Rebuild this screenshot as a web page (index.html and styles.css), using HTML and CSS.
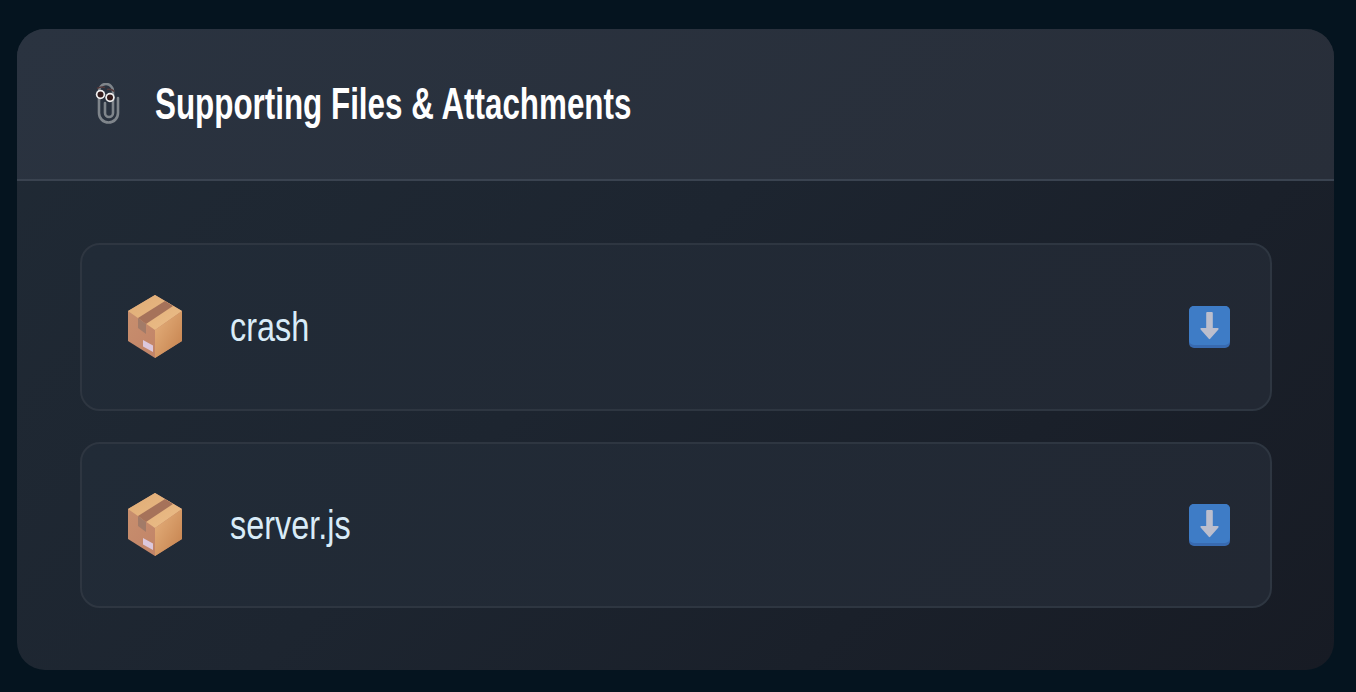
FILE: index.html
```html
<!DOCTYPE html>
<html lang="en">
<head>
    <meta charset="UTF-8">
    <meta name="viewport" content="width=device-width, initial-scale=1.0">
    <title>Supporting Files &amp; Attachments</title>
    <link rel="stylesheet" href="styles.css">
</head>
<body>
    <svg class="defs" width="0" height="0" aria-hidden="true">
        <defs>
            <linearGradient id="box-top" x1="0" y1="0" x2="1" y2="1">
                <stop offset="0" stop-color="#e0ac76"/>
                <stop offset="1" stop-color="#ebbd88"/>
            </linearGradient>
            <linearGradient id="box-left" x1="0" y1="0" x2="1" y2="1">
                <stop offset="0" stop-color="#c9916f"/>
                <stop offset="1" stop-color="#bf7f65"/>
            </linearGradient>
            <linearGradient id="box-right" x1="0" y1="0" x2="1" y2="1">
                <stop offset="0" stop-color="#e6b27e"/>
                <stop offset="1" stop-color="#c4804c"/>
            </linearGradient>
            <symbol id="box" viewBox="0 0 56 64">
                <path d="M28 0 L55 16 V46 L28 63 L1 46 V16 Z" fill="url(#box-left)"/>
                <path d="M28 0 L55 16 L28 35 L1 16 Z" fill="url(#box-top)"/>
                <path d="M55 16 L28 35 V63 L55 46 Z" fill="url(#box-right)"/>
                <path d="M11 23 L38 6 L46 11 L19 29 Z" fill="#a6725a"/>
                <path d="M11 23 L19 29 V39 L11 33 Z" fill="#a27b68"/>
                <path d="M16 45 L26 50.500 V57 L16 51.500 Z" fill="#dcc8dc"/>
            </symbol>
            <symbol id="arrow" viewBox="0 0 41 42">
                <rect width="41" height="42" rx="5" fill="#386ab0"/>
                <rect width="41" height="39" rx="5" fill="#3e7cc6"/>
                <path d="M17.200 7 Q17.200 6 18.200 6 H22.800 Q23.800 6 23.800 7 V22 H28.800 Q30.300 22 29.400 23.500 L21.200 32.800 Q20.500 33.500 19.800 32.800 L11.600 23.500 Q10.700 22 12.200 22 H17.200 Z" fill="#bbbecd"/>
            </symbol>
        </defs>
    </svg>

    <div class="card">
        <div class="card-head">
            <svg class="clip" viewBox="0 0 25 42" aria-hidden="true">
                <path d="M10 20 V30 a4 4 0 0 0 8 0 V8 a7 7 0 0 0 -14 0 V30 a9.500 9.500 0 0 0 19 0 V15" fill="none" stroke="#7f858b" stroke-width="2.600" stroke-linecap="round"/>
                <circle cx="5.500" cy="11.500" r="4.700" fill="#f0f0f0"/>
                <circle cx="5.500" cy="11.500" r="3" fill="#351d1d"/>
                <circle cx="15" cy="14.500" r="4.700" fill="#f0f0f0"/>
                <circle cx="15" cy="14.500" r="3" fill="#351d1d"/>
                <path d="M2 5.500 Q6 3 10 4.500 M12 6.500 Q16 5.500 19.500 8.500" fill="none" stroke="#54393a" stroke-width="1.600"/>
            </svg>
            <h1 class="card-title">Supporting Files &amp; Attachments</h1>
        </div>
        <div class="file-list">
            <div class="file-row file-row-tall">
                <svg class="file-icon"><use href="#box"/></svg>
                <span class="file-name">crash</span>
                <svg class="download"><use href="#arrow"/></svg>
            </div>
            <div class="file-row">
                <svg class="file-icon"><use href="#box"/></svg>
                <span class="file-name">server.js</span>
                <svg class="download"><use href="#arrow"/></svg>
            </div>
        </div>
    </div>
</body>
</html>
```

FILE: styles.css
```css
* {
    box-sizing: border-box;
}
html, body {
    height: 100%;
}
body {
    margin: 0;
    padding: 29px 22px 22px 17px;
    background-color: #05141f;
    font-family: "Liberation Sans", sans-serif;
    overflow: hidden;
}
.defs {
    position: absolute;
}
.card {
    height: 641px;
    border-radius: 28px;
    overflow: hidden;
    background: linear-gradient(135deg, #202a35 0%, #1d2530 45%, #171b24 100%);
}
.card-head {
    height: 152px;
    display: flex;
    align-items: center;
    padding: 0 0 0 78px;
    background: linear-gradient(135deg, #2a3340, #282e39);
    border-bottom: 2px solid #3a4350;
}
.clip {
    width: 25px;
    height: 42px;
    margin-right: 35px;
    flex: none;
}
/* no handwriting font here, so the text is squeezed to the original's width */
.card-title {
    margin: 0;
    font-size: 44px;
    font-weight: 700;
    color: #ffffff;
    white-space: nowrap;
    transform: scaleX(0.713);
    transform-origin: left center;
}
.file-list {
    display: flex;
    flex-direction: column;
    gap: 31px;
    padding: 62px 62px 0 63px;
}
.file-row {
    display: flex;
    align-items: center;
    height: 166px;
    padding: 0 40px 0 45px;
    background: linear-gradient(135deg, #212b37, #222833);
    border: 2px solid #2e3641;
    border-radius: 20px;
}
.file-row-tall {
    height: 168px;
}
.file-icon {
    width: 56px;
    height: 64px;
    margin-right: 47px;
    flex: none;
}
.file-name {
    flex: 1;
    font-size: 40px;
    color: #d9ecf8;
    transform: scaleX(0.81);
    transform-origin: left center;
}
.download {
    width: 41px;
    height: 42px;
    flex: none;
}
```
